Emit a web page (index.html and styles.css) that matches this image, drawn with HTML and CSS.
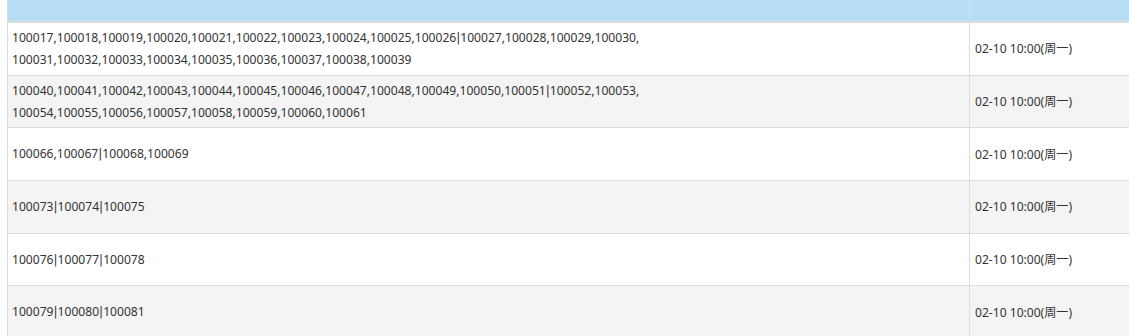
FILE: index.html
```html
<!DOCTYPE html>
<html lang="zh-CN">
<head>
<meta charset="utf-8">
<title>Schedule</title>
<link rel="stylesheet" href="styles.css">
</head>
<body>
<div class="wrap">
<table class="grid">
  <thead>
    <tr><th class="c-ids"></th><th class="c-time"></th></tr>
  </thead>
  <tbody>
    <tr><td class="c-ids">100017,100018,100019,100020,100021,100022,100023,100024,100025,100026<span class="sep">|</span>100027,100028,100029,100030,<br>100031,100032,100033,100034,100035,100036,100037,100038,100039</td><td class="c-time">02-10 10:00(周一)</td></tr>
    <tr class="alt"><td class="c-ids">100040,100041,100042,100043,100044,100045,100046,100047,100048,100049,100050,100051<span class="sep">|</span>100052,100053,<br>100054,100055,100056,100057,100058,100059,100060,100061</td><td class="c-time">02-10 10:00(周一)</td></tr>
    <tr><td class="c-ids">100066,100067<span class="sep">|</span>100068,100069</td><td class="c-time">02-10 10:00(周一)</td></tr>
    <tr class="alt"><td class="c-ids">100073<span class="sep">|</span>100074<span class="sep">|</span>100075</td><td class="c-time">02-10 10:00(周一)</td></tr>
    <tr><td class="c-ids">100076<span class="sep">|</span>100077<span class="sep">|</span>100078</td><td class="c-time">02-10 10:00(周一)</td></tr>
    <tr class="alt"><td class="c-ids">100079<span class="sep">|</span>100080<span class="sep">|</span>100081</td><td class="c-time">02-10 10:00(周一)</td></tr>
  </tbody>
</table>
</div>
</body>
</html>
```
FILE: styles.css
```css
html, body {
  margin: 0;
  padding: 0;
  background: #fff;
  overflow: hidden;
}
.wrap {
  padding-left: 7px;
}
.grid {
  border-collapse: collapse;
  table-layout: fixed;
  width: 1160px;
  font-family: "Noto Sans", "Open Sans", "Noto Sans CJK SC", sans-serif;
  font-size: 12.1px;
  color: #333;
  border-left: 1px solid #dcdcdc;
}
.grid th {
  background: #b8ddf7;
  height: 21px;
  padding: 0;
  border-bottom: 2px solid #dcdcdc;
  border-right: 1px solid #cfe3f1;
}
.grid th.c-ids { width: 961px; }
.grid td {
  height: 51.7px;
  padding: 0 4px;
  line-height: 21px;
  vertical-align: middle;
  border-bottom: 1px solid #dcdcdc;
  border-right: 1px solid #dcdcdc;
  white-space: nowrap;
}
.grid td.c-time {
  padding-left: 5px;
}
.grid tr.alt td {
  background: #f4f4f4;
}
.sep {
  font-family: "DejaVu Sans", sans-serif;
  font-size: 12px;
}
```
